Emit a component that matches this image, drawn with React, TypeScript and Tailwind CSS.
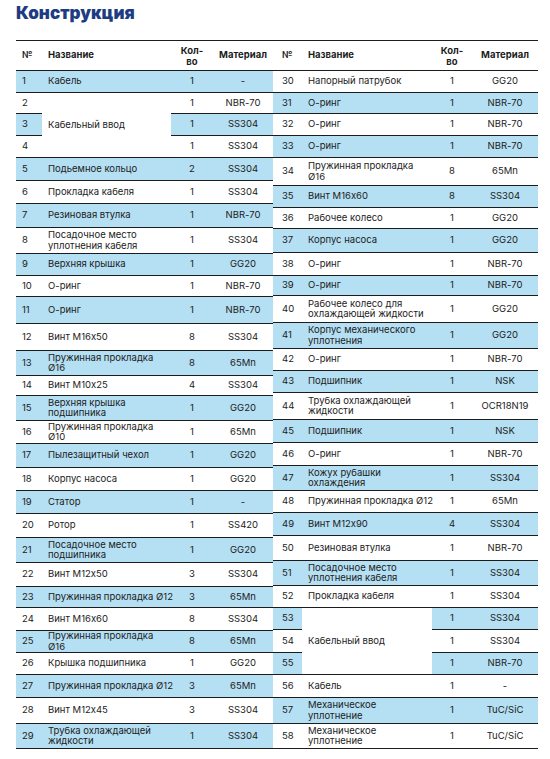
import React from "react";

type Row = { n: number; name: string[]; q: string; m: string; h: string };
type Group = { kind: "group"; name: string; rows: { n: number; q: string; m: string; h: string }[]; h: string };
type Item = Row | Group;

const BLUE = "bg-[#b5dff3]";

const left: Item[] = [
  { n: 1, name: ["Кабель"], q: "1", m: "-", h: "h-[22px]" },
  {
    kind: "group",
    name: "Кабельный ввод",
    h: "h-[65px]",
    rows: [
      { n: 2, q: "1", m: "NBR-70", h: "h-[21px]" },
      { n: 3, q: "1", m: "SS304", h: "h-[22px]" },
      { n: 4, q: "1", m: "SS304", h: "h-[22px]" },
    ],
  },
  { n: 5, name: ["Подьемное кольцо"], q: "2", m: "SS304", h: "h-[23px]" },
  { n: 6, name: ["Прокладка кабеля"], q: "1", m: "SS304", h: "h-[23px]" },
  { n: 7, name: ["Резиновая втулка"], q: "1", m: "NBR-70", h: "h-[24px]" },
  { n: 8, name: ["Посадочное место", "уплотнения кабеля"], q: "1", m: "SS304", h: "h-[26px]" },
  { n: 9, name: ["Верхняя крышка"], q: "1", m: "GG20", h: "h-[22px]" },
  { n: 10, name: ["О-ринг"], q: "1", m: "NBR-70", h: "h-[21px]" },
  { n: 11, name: ["О-ринг"], q: "1", m: "NBR-70", h: "h-[27px]" },
  { n: 12, name: ["Винт M16x50"], q: "8", m: "SS304", h: "h-[27px]" },
  { n: 13, name: ["Пружинная прокладка", "Ø16"], q: "8", m: "65Mn", h: "h-[25px]" },
  { n: 14, name: ["Винт M10x25"], q: "4", m: "SS304", h: "h-[20px]" },
  { n: 15, name: ["Верхняя крышка", "подшипника"], q: "1", m: "GG20", h: "h-[25px]" },
  { n: 16, name: ["Пружинная прокладка", "Ø10"], q: "1", m: "65Mn", h: "h-[23px]" },
  { n: 17, name: ["Пылезащитный чехол"], q: "1", m: "GG20", h: "h-[24px]" },
  { n: 18, name: ["Корпус насоса"], q: "1", m: "GG20", h: "h-[23px]" },
  { n: 19, name: ["Статор"], q: "1", m: "-", h: "h-[23px]" },
  { n: 20, name: ["Ротор"], q: "1", m: "SS420", h: "h-[24px]" },
  { n: 21, name: ["Посадочное место", "подшипника"], q: "1", m: "GG20", h: "h-[25px]" },
  { n: 22, name: ["Винт M12x50"], q: "3", m: "SS304", h: "h-[24px]" },
  { n: 23, name: ["Пружинная прокладка Ø12"], q: "3", m: "65Mn", h: "h-[21px]" },
  { n: 24, name: ["Винт M16x60"], q: "8", m: "SS304", h: "h-[23px]" },
  { n: 25, name: ["Пружинная прокладка", "Ø16"], q: "8", m: "65Mn", h: "h-[22px]" },
  { n: 26, name: ["Крышка подшипника"], q: "1", m: "GG20", h: "h-[22px]" },
  { n: 27, name: ["Пружинная прокладка Ø12"], q: "3", m: "65Mn", h: "h-[23px]" },
  { n: 28, name: ["Винт M12x45"], q: "3", m: "SS304", h: "h-[26px]" },
  { n: 29, name: ["Трубка охлаждающей", "жидкости"], q: "1", m: "SS304", h: "h-[25px]" },
];

const right: Item[] = [
  { n: 30, name: ["Напорный патрубок"], q: "1", m: "GG20", h: "h-[22px]" },
  { n: 31, name: ["О-ринг"], q: "1", m: "NBR-70", h: "h-[21px]" },
  { n: 32, name: ["О-ринг"], q: "1", m: "NBR-70", h: "h-[22px]" },
  { n: 33, name: ["О-ринг"], q: "1", m: "NBR-70", h: "h-[22px]" },
  { n: 34, name: ["Пружинная прокладка", "Ø16"], q: "8", m: "65Mn", h: "h-[28px]" },
  { n: 35, name: ["Винт M16x60"], q: "8", m: "SS304", h: "h-[22px]" },
  { n: 36, name: ["Рабочее колесо"], q: "1", m: "GG20", h: "h-[21px]" },
  { n: 37, name: ["Корпус насоса"], q: "1", m: "GG20", h: "h-[24px]" },
  { n: 38, name: ["О-ринг"], q: "1", m: "NBR-70", h: "h-[23px]" },
  { n: 39, name: ["О-ринг"], q: "1", m: "NBR-70", h: "h-[20px]" },
  { n: 40, name: ["Рабочее колесо для", "охлаждающей жидкости"], q: "1", m: "GG20", h: "h-[27px]" },
  { n: 41, name: ["Корпус механического", "уплотнения"], q: "1", m: "GG20", h: "h-[26px]" },
  { n: 42, name: ["О-ринг"], q: "1", m: "NBR-70", h: "h-[22px]" },
  { n: 43, name: ["Подшипник"], q: "1", m: "NSK", h: "h-[22px]" },
  { n: 44, name: ["Трубка охлаждающей", "жидкости"], q: "1", m: "OCR18N19", h: "h-[27px]" },
  { n: 45, name: ["Подшипник"], q: "1", m: "NSK", h: "h-[23px]" },
  { n: 46, name: ["О-ринг"], q: "1", m: "NBR-70", h: "h-[23px]" },
  { n: 47, name: ["Кожух рубашки", "охлаждения"], q: "1", m: "SS304", h: "h-[25px]" },
  { n: 48, name: ["Пружинная прокладка Ø12"], q: "1", m: "65Mn", h: "h-[22px]" },
  { n: 49, name: ["Винт M12x90"], q: "4", m: "SS304", h: "h-[23px]" },
  { n: 50, name: ["Резиновая втулка"], q: "1", m: "NBR-70", h: "h-[25px]" },
  { n: 51, name: ["Посадочное место", "уплотнения кабеля"], q: "1", m: "SS304", h: "h-[25px]" },
  { n: 52, name: ["Прокладка кабеля"], q: "1", m: "SS304", h: "h-[22px]" },
  {
    kind: "group",
    name: "Кабельный ввод",
    h: "h-[67px]",
    rows: [
      { n: 53, q: "1", m: "SS304", h: "h-[22px]" },
      { n: 54, q: "1", m: "SS304", h: "h-[23px]" },
      { n: 55, q: "1", m: "NBR-70", h: "h-[22px]" },
    ],
  },
  { n: 56, name: ["Кабель"], q: "1", m: "-", h: "h-[23px]" },
  { n: 57, name: ["Механическое", "уплотнение"], q: "1", m: "TuC/SiC", h: "h-[26px]" },
  { n: 58, name: ["Механическое", "уплотнение"], q: "1", m: "TuC/SiC", h: "h-[25px]" },
];

type Cols = { w: string; no: string; name: string; q: string; m: string; noPad: string };

const LC: Cols = { w: "w-[257px]", no: "w-[26px]", name: "w-[129px]", q: "w-[42px]", m: "w-[60px]", noPad: "pl-[6px]" };
const RC: Cols = { w: "w-[265px]", no: "w-[29px]", name: "w-[130px]", q: "w-[40px]", m: "w-[66px]", noPad: "pl-[9px]" };

const LINE = "border-b border-[#1c1c1c]";

function Header({ c }: { c: Cols }) {
  return (
    <div className={`flex h-[30px] items-center ${LINE} font-bold text-[9.5px] text-[#1c1c1c]`}>
      <div className={`${c.no} ${c.noPad}`}>№</div>
      <div className={`${c.name} pl-[6px]`}>Название</div>
      <div className={`${c.q} text-center leading-[11px]`}>
        Кол-
        <br />
        во
      </div>
      <div className={`${c.m} text-center`}>Материал</div>
    </div>
  );
}

function Table({ items, c }: { items: Item[]; c: Cols }) {
  return (
    <div className={`${c.w} flex flex-col border-t border-[#1c1c1c]`}>
      <Header c={c} />
      {items.map((it, i) => {
        if ("kind" in it) {
          return (
            <div key={i} className={`flex ${it.h}`}>
              <div className={`${c.no} flex flex-col`}>
                {it.rows.map((r) => (
                  <div key={r.n} className={`${r.h} ${LINE} ${c.noPad} flex items-center ${r.n % 2 ? BLUE : ""}`}>
                    {r.n}
                  </div>
                ))}
              </div>
              <div className={`${c.name} ${LINE} pl-[6px] flex items-center bg-white whitespace-nowrap`}>{it.name}</div>
              <div className="flex flex-col grow">
                {it.rows.map((r) => (
                  <div key={r.n} className={`${r.h} ${LINE} flex items-center ${r.n % 2 ? BLUE : ""}`}>
                    <div className={`${c.q} text-center`}>{r.q}</div>
                    <div className={`${c.m} text-center`}>{r.m}</div>
                  </div>
                ))}
              </div>
            </div>
          );
        }
        return (
          <div key={i} className={`flex items-center ${it.h} ${LINE} ${it.n % 2 ? BLUE : ""}`}>
            <div className={`${c.no} ${c.noPad}`}>{it.n}</div>
            <div className={`${c.name} pl-[6px] leading-[10.5px] whitespace-nowrap`}>
              {it.name.map((l, j) => (
                <div key={j}>{l}</div>
              ))}
            </div>
            <div className={`${c.q} text-center`}>{it.q}</div>
            <div className={`${c.m} text-center`}>{it.m}</div>
          </div>
        );
      })}
    </div>
  );
}

export default function App() {
  return (
    <div
      className="w-[550px] h-[759px] bg-white text-[#1c1c1c] text-[9.5px] overflow-hidden"
      style={{ fontFamily: "Inter, 'Noto Sans', sans-serif", fontFeatureSettings: '"calt" 0' }}
    >
      <div className="pl-4 pt-[3px] h-[40px]">
        <h1 className="text-[17px] leading-[20px] font-black text-[#1d3c82]">Конструкция</h1>
      </div>
      <div className="flex pl-4">
        <Table items={left} c={LC} />
        <Table items={right} c={RC} />
      </div>
    </div>
  );
}
